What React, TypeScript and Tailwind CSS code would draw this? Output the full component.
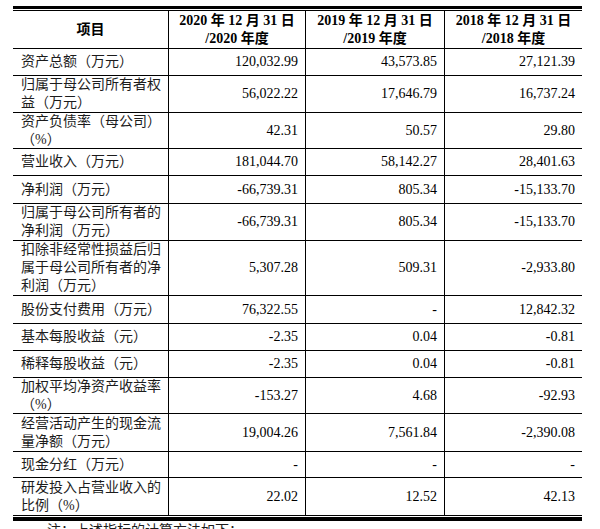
type Row = {
  label: string[];
  values: [string, string, string];
  height: string;
};

const rows: Row[] = [
  { label: ["资产总额（万元）"], values: ["120,032.99", "43,573.85", "27,121.39"], height: "h-[27px]" },
  { label: ["归属于母公司所有者权", "益（万元）"], values: ["56,022.22", "17,646.79", "16,737.24"], height: "h-[37px]" },
  { label: ["资产负债率（母公司）", "（%）"], values: ["42.31", "50.57", "29.80"], height: "h-[36px]" },
  { label: ["营业收入（万元）"], values: ["181,044.70", "58,142.27", "28,401.63"], height: "h-[27px]" },
  { label: ["净利润（万元）"], values: ["-66,739.31", "805.34", "-15,133.70"], height: "h-[28px]" },
  { label: ["归属于母公司所有者的", "净利润（万元）"], values: ["-66,739.31", "805.34", "-15,133.70"], height: "h-[37px]" },
  {
    label: ["扣除非经常性损益后归", "属于母公司所有者的净", "利润（万元）"],
    values: ["5,307.28", "509.31", "-2,933.80"],
    height: "h-[55px]",
  },
  { label: ["股份支付费用（万元）"], values: ["76,322.55", "-", "12,842.32"], height: "h-[28px]" },
  { label: ["基本每股收益（元）"], values: ["-2.35", "0.04", "-0.81"], height: "h-[27px]" },
  { label: ["稀释每股收益（元）"], values: ["-2.35", "0.04", "-0.81"], height: "h-[27px]" },
  { label: ["加权平均净资产收益率", "（%）"], values: ["-153.27", "4.68", "-92.93"], height: "h-[36px]" },
  { label: ["经营活动产生的现金流", "量净额（万元）"], values: ["19,004.26", "7,561.84", "-2,390.08"], height: "h-[38px]" },
  { label: ["现金分红（万元）"], values: ["-", "-", "-"], height: "h-[26px]" },
  { label: ["研发投入占营业收入的", "比例（%）"], values: ["22.02", "12.52", "42.13"], height: "h-[38px]" },
];

const years = ["2020", "2019", "2018"];

export default function App() {
  return (
    <div className="h-[529px] w-[600px] overflow-hidden bg-white pl-[13px] pt-[6px] font-['Liberation_Serif','Noto_Sans_CJK_SC',serif] text-[14px] leading-[18px] text-black">
      <div className="w-[569px] border-t-[3px] border-b-[4px] border-black">
        <div className="mt-px mb-px border-t border-black">
          {/* header */}
          <div className="grid h-[38px] grid-cols-[156px_137px_139px_137px] border-b border-black font-bold">
            <div className="flex items-center justify-center border-r border-black">项目</div>
            {years.map((year, index) => (
              <div
                key={year}
                className={`flex flex-col items-center justify-center whitespace-nowrap ${index < 2 ? "border-r border-black" : ""}`}
              >
                <span>{year} 年 12 月 31 日</span>
                <span>/{year} 年度</span>
              </div>
            ))}
          </div>

          {rows.map((row, rowIndex) => (
            <div
              key={rowIndex}
              className={`grid grid-cols-[156px_137px_139px_137px] border-b border-black ${row.height}`}
            >
              <div className="flex flex-col justify-center border-r border-black pl-2 text-[#1c1c1c]">
                {row.label.map((line) => (
                  <span key={line} className="whitespace-nowrap">
                    {line}
                  </span>
                ))}
              </div>
              {row.values.map((value, index) => (
                <div
                  key={index}
                  className={`flex items-center justify-end pr-[7px] ${index < 2 ? "border-r border-black" : "pr-2"}`}
                >
                  {value}
                </div>
              ))}
            </div>
          ))}
        </div>
      </div>
      <p className="mt-px pl-[34px] text-[#1c1c1c]">注：上述指标的计算方法如下：</p>
    </div>
  );
}
